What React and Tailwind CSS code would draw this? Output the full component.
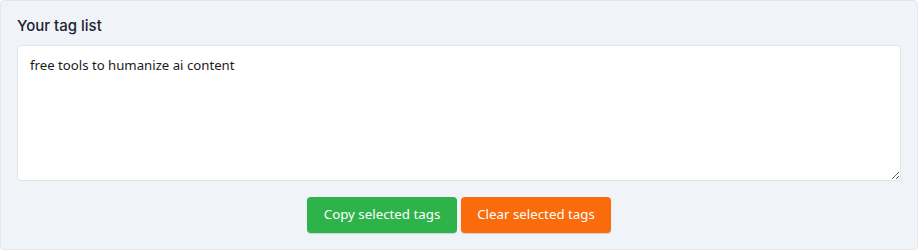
import React, { useState } from 'react';

export default function App() {
  const [tags, setTags] = useState('free tools to humanize ai content');

  return (
    <div className="w-[918px] h-[250px] bg-white">
      <div className="w-[918px] h-[250px] bg-[#f0f3f8] border border-[#e3e6eb] rounded-[4px] px-4 pt-[16px]">
        <label className="block text-[15px] leading-[18px] font-medium text-[#1c2433] font-['Inter',sans-serif]">
          Your tag list
        </label>
        <textarea
          value={tags}
          onChange={(e) => setTags(e.target.value)}
          className="mt-[10px] block w-[884px] h-[136px] bg-white border border-[#e1e4e9] rounded-[4px] px-3 py-[10px] text-[13.2px] leading-[19px] text-[#1a1a1a] font-['Noto_Sans',sans-serif] outline-none resize-y"
        />
        <div className="flex justify-center gap-1 mt-4">
          <button className="w-[150px] h-[36px] rounded-[4px] bg-[#2db34a] text-white text-[13.3px] font-['Noto_Sans',sans-serif] shadow-[0_1px_1px_rgba(0,0,0,0.15)]">
            Copy selected tags
          </button>
          <button className="w-[150px] h-[36px] rounded-[4px] bg-[#f96b0b] text-white text-[13.3px] font-['Noto_Sans',sans-serif] shadow-[0_1px_1px_rgba(0,0,0,0.15)]">
            Clear selected tags
          </button>
        </div>
      </div>
    </div>
  );
}
